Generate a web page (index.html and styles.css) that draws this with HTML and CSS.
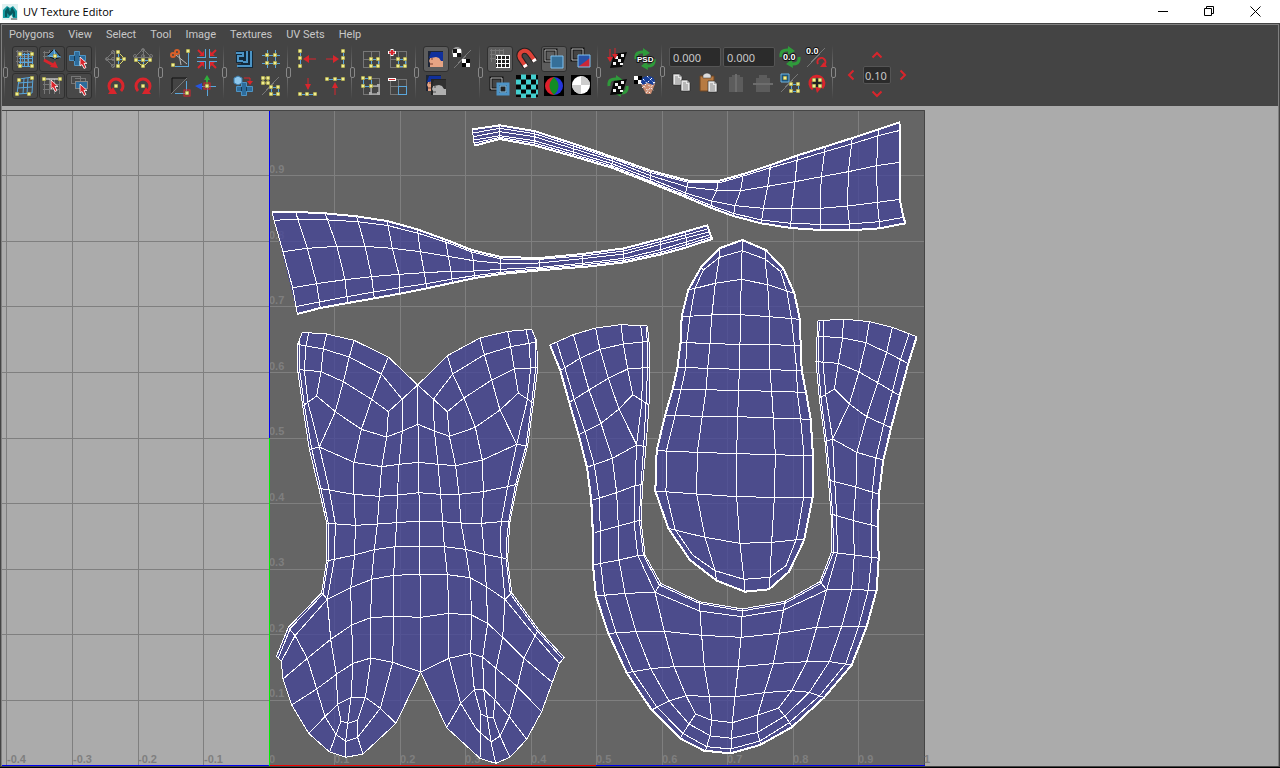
FILE: index.html
```
<!DOCTYPE html>
<html lang="en">

<head>
  <meta charset="UTF-8">
  <meta name="viewport" content="width=device-width, initial-scale=1.0">
  <title>UV Texture Editor</title>
  <link rel="stylesheet" href="styles.css">
</head>

<body>
  <!-- shared icon parts -->
  <svg class="defs" aria-hidden="true">
    <defs>
      <g id="pt"><rect x="-2" y="-2" width="4" height="4" fill="#77742c"/><rect x="-1.5" y="-1.5" width="3" height="3" fill="#f2ee90"/></g>
      <g id="cursor"><path d="M0 0v9l2-1.500 2 4 2-1-2-4h3z" fill="#d9252c" stroke="#fff" stroke-width=".8"/></g>
      <g id="face">
        <rect width="15" height="16" fill="#1d2536"/>
        <path d="M3 5L1 10l1 2v4h13V5z" fill="#e6a484"/>
        <path d="M3 1h12v9h-2l-2-3-3-1-5 1H1z" fill="#10309c"/>
        <path d="M3 8h2M2 13h3" stroke="#7c4030"/>
      </g>
      <g id="sheet">
        <path d="M0 0h6l3 3v8H0z" fill="#e6e6e6" stroke="#222" stroke-width=".6"/>
        <path d="M2 3h3M2 5h5M2 7h5M2 9h5" stroke="#888"/>
        <path d="M6 0v3h3" fill="#aaa"/>
      </g>
      <g id="cycle">
        <path d="M3 12Q2 4 11 5M21 12q1 8-8 7" fill="none" stroke="#2f9a3b" stroke-width="3"/>
        <path d="M10 1l7 5-7 4zM14 14l-6 5 7 4z" fill="#2f9a3b"/>
      </g>
      <g id="plate">
        <path d="M8 7l13-2-5 15L4 21z" fill="#080808"/>
        <path d="M9 9h3v3H9zM15 7h3v3h-3zM12 12h3v3h-3zM7 15h3v3H7zM14 16h3v2h-3z" fill="#f4f4f4"/>
      </g>
    </defs>
  </svg>

  <header class="titlebar">
    <svg class="logo" viewBox="0 0 16 16">
      <rect width="16" height="16" fill="#dff1f1"/>
      <path d="M1 14V6l4-4 3 2 3-2 4 5v7h-4l-2-4-2 4z" fill="#139aa0"/>
      <path d="M3 13V7l3-4 2 5 2-5 3 5v5h-2V9l-3 3-3-3v4z" fill="#07585f"/>
      <path d="M9 15h6" stroke="#444"/>
    </svg>
    <h1>UV Texture Editor</h1>
    <div class="window-buttons">
      <button aria-label="Minimize"><svg viewBox="0 0 11 11"><path d="M0 5.500h10"/></svg></button>
      <button aria-label="Restore"><svg viewBox="0 0 11 11"><path d="M.5 2.500h7v7h-7zM2.500 2.500v-2h7v7h-2"/></svg></button>
      <button aria-label="Close"><svg viewBox="0 0 11 11"><path d="M.5.5l10 10M10.500.5l-10 10"/></svg></button>
    </div>
  </header>

  <main class="frame">
    <nav class="menu">
      <a href="#">Polygons</a>
      <a href="#">View</a>
      <a href="#">Select</a>
      <a href="#">Tool</a>
      <a href="#">Image</a>
      <a href="#">Textures</a>
      <a href="#">UV Sets</a>
      <a href="#">Help</a>
    </nav>

    <div class="toolbar">
      <div class="group">
        <div class="handle"></div>
        <div class="tools three">
          <button class="boxed" aria-label="UV lattice"><svg viewBox="0 0 24 24">
            <path class="gray" d="M3 4h16M3 9h16M3 14h16M4 3v16M9 3v16M14 3v16"/>
            <path class="blue" d="M6 7h14M6 11h14M6 15h14M6 19h14M7 6v14M11 6v14M15 6v14M19 6v14"/>
            <use href="#pt" x="7" y="7"/><use href="#pt" x="19" y="7"/><use href="#pt" x="7" y="19"/><use href="#pt" x="19" y="19"/></svg></button>
          <button class="boxed" aria-label="Move UV shell"><svg viewBox="0 0 24 24">
            <path class="gray" d="M3 5h11M3 9h8M4 4v9M9 3v8"/>
            <path d="M7 9l7-7 7 8-6 2z" fill="#3f83b5" stroke="#111"/><path d="M14 2l1 10M7 9l14 1" stroke="#7cc0ee"/>
            <path d="M4 13l11 6" stroke="#d9252c" stroke-width="3"/><path d="M18 21l-8-1 5-6z" fill="#d9252c"/><use href="#pt" x="15" y="9"/></svg></button>
          <button class="boxed" aria-label="Shortest path"><svg viewBox="0 0 24 24">
            <path d="M2.500 8.500h5v-4h5v4h6v5h-6v5h-5v-5h-5z" fill="#2d6c9c" stroke="#4f94c4"/><path d="M7.500 9v5M12.500 9v5" stroke="#163a55"/>
            <use href="#cursor" x="13" y="10"/></svg></button>
          <button class="boxed" aria-label="UV smudge"><svg viewBox="0 0 24 24">
            <path class="skew" d="M6 5l14-2-1 16-15 1zM11 4l-1 16M15 4l-1 16M5 9l14-1M5 14l14-1"/>
            <use href="#pt" x="6" y="6"/><use href="#pt" x="19" y="4"/><use href="#pt" x="4" y="20"/><use href="#pt" x="16" y="20"/></svg></button>
          <button class="boxed" aria-label="Tweak UV"><svg viewBox="0 0 24 24">
            <path class="gray" d="M3 10h17M3 15h17M4 5v15M9 5v15M14 5v15M19 5v15"/><path d="M4 5h17" stroke="#fff"/>
            <use href="#pt" x="4" y="5"/><use href="#pt" x="20" y="5"/><use href="#cursor" x="11" y="6"/></svg></button>
          <button class="boxed" aria-label="Select shell"><svg viewBox="0 0 24 24">
            <path class="gray" d="M4 2h9v7H4zM8 4h10v6"/><rect x="8.500" y="7.500" width="12" height="7" fill="#2d6c9c" stroke="#111"/><rect x="8.500" y="7.500" width="12" height="7" fill="none" stroke="#fff" stroke-dasharray="1 1"/>
            <use href="#cursor" x="13" y="10"/></svg></button>
        </div>
      </div>

      <div class="group">
        <div class="handle"></div>
        <div class="tools two">
          <button aria-label="Flip U"><svg viewBox="0 0 24 24">
            <path class="gray" d="M10 4l-8 8 8 8M10 4v16M2 12h8"/><path class="blue" d="M14 4v16M14 12h7"/><path class="yellow" d="M14 5l7 7-7 7"/>
            <circle class="gray" cx="3" cy="12" r="1.500"/><circle class="gray" cx="9" cy="12" r="1.500"/><circle class="gray" cx="9" cy="5" r="1.500"/><circle class="gray" cx="9" cy="19" r="1.500"/>
            <use href="#pt" x="14" y="5"/><use href="#pt" x="14" y="12"/><use href="#pt" x="20" y="12"/><use href="#pt" x="14" y="19"/></svg></button>
          <button aria-label="Flip V"><svg viewBox="0 0 24 24">
            <path class="gray" d="M4 10l8-8 8 8zM12 2v8"/><path class="blue" d="M4 13h16M12 13v7"/><path class="yellow" d="M5 13l7 7 7-7"/>
            <circle class="gray" cx="4" cy="9" r="1.500"/><circle class="gray" cx="12" cy="3" r="1.500"/><circle class="gray" cx="20" cy="9" r="1.500"/><circle class="gray" cx="12" cy="9" r="1.500"/>
            <use href="#pt" x="5" y="13"/><use href="#pt" x="12" y="13"/><use href="#pt" x="19" y="13"/><use href="#pt" x="12" y="19"/></svg></button>
          <button aria-label="Rotate counterclockwise"><svg viewBox="0 0 24 24"><path class="turn" d="M7 17a7 7 0 1 1 10 0"/><path d="M4 20l9 0-4-7z" fill="#d9252c"/><use href="#pt" x="12" y="12"/></svg></button>
          <button aria-label="Rotate clockwise"><svg viewBox="0 0 24 24"><path class="turn" d="M7 17a7 7 0 1 1 10 0"/><path d="M20 20l-9 0 4-7z" fill="#d9252c"/><use href="#pt" x="12" y="12"/></svg></button>
        </div>
      </div>

      <div class="group">
        <div class="handle"></div>
        <div class="tools two">
          <button aria-label="Cut UVs"><svg viewBox="0 0 24 24">
            <path class="blue" d="M20 5v14H6"/><path d="M8 8l11 9M11 7l2 11" stroke="#b9b9b9"/>
            <circle cx="5" cy="8" r="2" class="orange"/><circle cx="9" cy="5" r="2" class="orange"/>
            <use href="#pt" x="20" y="4"/><use href="#pt" x="5" y="18"/></svg></button>
          <button aria-label="Sew UVs"><svg viewBox="0 0 24 24">
            <path class="blue" d="M2 10h8V2M14 2v8h8M2 14h8v8M14 22v-8h8"/>
            <path class="red" d="M3 3l5 5M21 3l-5 5M3 21l5-5M21 21l-5-5"/><path d="M9 9H4l5-5zM15 9h5l-5-5zM9 15H4l5 5zM15 15h5l-5 5z" fill="#d9252c"/></svg></button>
          <button aria-label="Split UVs"><svg viewBox="0 0 24 24">
            <path d="M4 19V4h15" stroke="#111" fill="none"/><path class="gray" d="M3 20L19 4"/><path class="blue" d="M18 7v12H7"/><rect x="16" y="16" width="6" height="6" class="red thin"/><use href="#pt" x="19" y="19"/></svg></button>
          <button aria-label="Move and sew"><svg viewBox="0 0 24 24">
            <path class="blue" d="M3 12h18M12 12v10"/><path d="M12 12V5" stroke="#2fae3b" stroke-width="2"/><path d="M9 6l3-5 3 5z" fill="#2fae3b"/><path d="M7 9v7l-7-4z" fill="#2655e0"/>
            <rect x="9" y="9" width="6" height="6" class="red thin"/><use href="#pt" x="12" y="12"/></svg></button>
        </div>
      </div>

      <div class="group">
        <div class="handle"></div>
        <div class="tools two">
          <button aria-label="Layout UVs"><svg viewBox="0 0 24 24"><path d="M4 6h7v4H6v4h5v5M19 4v15H6M15 4v11h-4" fill="none" stroke="#12293b" stroke-width="4"/><path d="M4 6h7v3H6v5h5M19 4v15H5M15 4v11h-4" fill="none" stroke="#4b94c6" stroke-width="2"/></svg></button>
          <button aria-label="Grid UVs"><svg viewBox="0 0 24 24"><path class="blue" d="M3 8h18M3 16h18M8 3v18M16 3v18"/><use href="#pt" x="8" y="8"/><use href="#pt" x="16" y="8"/><use href="#pt" x="8" y="16"/><use href="#pt" x="16" y="16"/></svg></button>
          <button aria-label="Unfold UVs"><svg viewBox="0 0 24 24">
            <path d="M4.500 12.500h5v-4h5v4h6v5h-6v4h-5v-4h-5z" fill="#2d6c9c" stroke="#4f94c4"/><path d="M9.500 13v4M14.500 13v4" stroke="#163a55"/>
            <path d="M2 4l4-2 4 2v5l-4 2-4-2z" fill="#8ec8ee" stroke="#3a7cab"/><path class="red thin" d="M12 4h6v4"/><path d="M15 7h6l-3 4z" fill="#d9252c"/></svg></button>
          <button aria-label="Cycle UVs"><svg viewBox="0 0 24 24">
            <path class="gray" d="M3 21L20 3"/><path class="yellow" d="M4 4h5v5H4z"/><path class="blue" d="M12 13h7v7h-7z"/>
            <use href="#pt" x="4" y="4"/><use href="#pt" x="9" y="4"/><use href="#pt" x="4" y="9"/><use href="#pt" x="9" y="9"/><use href="#pt" x="12" y="13"/><use href="#pt" x="19" y="13"/><use href="#pt" x="12" y="20"/><use href="#pt" x="19" y="20"/></svg></button>
        </div>
      </div>

      <div class="group">
        <div class="handle"></div>
        <div class="tools two">
          <button aria-label="Align minimum U"><svg viewBox="0 0 24 24"><path class="blue" d="M4 4v15"/><use href="#pt" x="4" y="4"/><use href="#pt" x="4" y="11"/><use href="#pt" x="4" y="19"/><path class="red thin" d="M9 12h11"/><path d="M13 8v8l-6-4z" fill="#d9252c"/></svg></button>
          <button aria-label="Align maximum U"><svg viewBox="0 0 24 24"><path class="blue" d="M20 4v15"/><use href="#pt" x="20" y="4"/><use href="#pt" x="20" y="11"/><use href="#pt" x="20" y="19"/><path class="red thin" d="M3 12h11"/><path d="M10 8v8l6-4z" fill="#d9252c"/></svg></button>
          <button aria-label="Align minimum V"><svg viewBox="0 0 24 24"><path class="blue" d="M4 20h16"/><use href="#pt" x="4" y="20"/><use href="#pt" x="11" y="20"/><use href="#pt" x="19" y="20"/><path class="red thin" d="M12 4v11"/><path d="M9 10h6l-3 6z" fill="#d9252c"/></svg></button>
          <button aria-label="Align maximum V"><svg viewBox="0 0 24 24"><path class="blue" d="M4 5h16"/><use href="#pt" x="4" y="5"/><use href="#pt" x="12" y="5"/><use href="#pt" x="20" y="5"/><path class="red thin" d="M12 10v11"/><path d="M9 14h6l-3-6z" fill="#d9252c"/></svg></button>
        </div>
      </div>

      <div class="group">
        <div class="handle"></div>
        <div class="tools two">
          <button aria-label="Isolate select"><svg viewBox="0 0 24 24"><path class="gray" d="M3 4h16v16H3zM11 4v16M3 12h16"/><path class="blue" d="M11 12h7v7h-7z"/><use href="#pt" x="11" y="12"/><use href="#pt" x="18" y="12"/><use href="#pt" x="11" y="19"/><use href="#pt" x="18" y="19"/></svg></button>
          <button aria-label="Add to isolated"><svg viewBox="0 0 24 24"><path class="gray" d="M3 4h16v16H3zM11 4v16M3 12h16"/><path class="blue" d="M11 12h7v7h-7z"/><use href="#pt" x="11" y="12"/><use href="#pt" x="18" y="12"/><use href="#pt" x="11" y="19"/><use href="#pt" x="18" y="19"/><path d="M5 2v7M1 5.500h8" stroke="#fff" stroke-width="3"/><path d="M5 3v5M2 5.500h6" stroke="#d9252c" stroke-width="2"/></svg></button>
          <button aria-label="Remove all"><svg viewBox="0 0 24 24"><path class="gray" d="M3 4h16v16H3zM11 4v16M3 12h16"/><path class="blue" d="M3 4h8v8H3z"/><path d="M11 12h8v8h-8z" stroke="#ccc" fill="none"/><use href="#pt" x="3" y="4"/><use href="#pt" x="10" y="4"/><use href="#pt" x="3" y="12"/><use href="#pt" x="11" y="12"/><path d="M17 10h3v3h-3zM9 18h3v3H9zM17 18h3v3h-3z" fill="#aaa"/></svg></button>
          <button aria-label="Remove selected"><svg viewBox="0 0 24 24"><path class="gray" d="M3 5h16v15H3zM11 5v15M3 12h16"/><path class="blue" d="M11 12h8v8h-8z"/><path d="M1 5.500h8" stroke="#fff" stroke-width="3"/><path d="M2 5.500h6" stroke="#d9252c" stroke-width="1"/></svg></button>
        </div>
      </div>

      <div class="group">
        <div class="handle"></div>
        <div class="tools two">
          <button class="boxed on" aria-label="Display image"><svg viewBox="0 0 24 24"><use href="#face" x="4" y="4"/></svg></button>
          <button aria-label="Filtered image"><svg viewBox="0 0 24 24"><path class="gray" d="M3 21L20 3"/><circle cx="6" cy="5" r="5" fill="#999"/><path d="M2 2h4v4H2zM6 6h4v4H6z" fill="#111"/><path d="M6 2h4v4H6zM2 6h4v4H2zM11 12h4v4h-4zM15 16h4v4h-4z" fill="#fff"/><path d="M15 12h4v4h-4zM11 16h4v4h-4z" fill="#000"/></svg></button>
          <button aria-label="Dim image"><svg viewBox="0 0 24 24"><use href="#face" x="2" y="1"/><g class="dim"><use href="#face" x="7" y="5"/></g></svg></button>
        </div>
      </div>

      <div class="group">
        <div class="handle"></div>
        <div class="tools four">
          <button class="boxed on" aria-label="View grid"><svg viewBox="0 0 24 24"><path class="gray" d="M3 2v13M7 2v13M11 2v13M15 2v13M2 3h14M2 7h14M2 11h14"/><path d="M8 8h13v13H8z" fill="#222"/><path class="white" d="M9 8v13M13 8v13M17 8v13M21 8v13M8 8.500h13M8 12.500h13M8 16.500h13M8 20.500h13"/></svg></button>
          <button aria-label="Pixel snap"><svg viewBox="0 0 24 24"><path d="M11 20L5 11q-2-5 3-7 4-1 7 3l5 7" fill="none" stroke="#222" stroke-width="6"/><path d="M11 20L5 11q-2-5 3-7 4-1 7 3l5 7" fill="none" stroke="#df4238" stroke-width="4"/><path d="M11 20l-1.500-2.300M20 14.500l-1.500-2.300" stroke="#fff" stroke-width="4"/></svg></button>
          <button class="boxed on" aria-label="Shade UVs"><svg viewBox="0 0 24 24"><path d="M3 3h11v11H3z" fill="none" stroke="#111" stroke-width="3"/><path d="M3 3h11v11H3z" fill="none" stroke="#bbb"/><path d="M9 9h12v12H9z" fill="#356f99" stroke="#7fc1f0"/></svg></button>
          <button aria-label="Shell distortion"><svg viewBox="0 0 24 24"><path d="M3 2h11v11H3z" fill="none" stroke="#111" stroke-width="3"/><path d="M3 2h11v11H3z" fill="none" stroke="#bbb"/><path d="M9 8h12v12H9z" fill="#2852a8"/><path d="M9 20L21 11v9z" fill="#cc2737"/><path d="M9 8h12v12H9z" fill="none" stroke="#7fc1f0"/></svg></button>
          <button aria-label="Shell borders"><svg viewBox="0 0 24 24"><path d="M3 4h11v11H3z" fill="none" stroke="#111" stroke-width="3"/><path d="M3 4h11v11H3z" fill="none" stroke="#bbb"/><path d="M10 10h10v10H10z" fill="#222" stroke="#4d94c7" stroke-width="3"/><path d="M12 12h6v6h-6z" stroke="#8ccaf3" fill="none"/></svg></button>
          <button aria-label="Checker map"><svg viewBox="0 0 24 24"><path d="M1 1h22v22H1z" fill="#050505"/><path d="M6 3h10M1 8h5M11 8h5M21 8h2M6 13h5M16 13h5M1 18h5M11 18h5M21 18h2M6 22h5M16 22h5M16 3h5" stroke="#44cfcf" stroke-width="5" stroke-dasharray="5 30"/></svg></button>
          <button aria-label="RGB channels"><svg viewBox="0 0 24 24"><path d="M2 2h20v20H2z" fill="#000"/><path d="M12 3a9 9 0 0 0 0 18z" fill="#df1f2c"/><path d="M12 3a9 9 0 0 1 0 18z" fill="#2535dc"/><path d="M12 3q-9 9 0 18 9-9 0-18z" fill="#138c24"/></svg></button>
          <button aria-label="Alpha channel"><svg viewBox="0 0 24 24"><path d="M2 1h20v20H2z" fill="#000"/><circle cx="12" cy="11" r="9" fill="#fff"/><path d="M12 2a9 9 0 0 1 9 9h-9zM12 20a9 9 0 0 1-9-9h9z" fill="#ccc"/></svg></button>
        </div>
      </div>

      <div class="group">
        <div class="handle"></div>
        <div class="tools two">
          <button aria-label="Bake texture"><svg viewBox="0 0 24 24"><use href="#plate"/><path class="red thin" d="M4 2v10M9 1v8"/><path d="M1 10h6l-3 5zM6 7h6l-3 5z" fill="#d9252c"/></svg></button>
          <button aria-label="Update PSD"><svg viewBox="0 0 24 24"><use href="#cycle"/><text class="psd" x="4" y="15">PSD</text></svg></button>
          <button aria-label="Refresh texture"><svg viewBox="0 0 24 24"><use href="#cycle"/><use href="#plate"/></svg></button>
          <button aria-label="Use image ratio"><svg viewBox="0 0 24 24"><path d="M1 2h8v8H1z" fill="#000"/><path d="M1 2h4v4H1zM5 6h4v4H5z" fill="#fff"/><path d="M8 10q0-7 7-7t7 7l-4 10h-5z" fill="#c98b70"/><path d="M8 9q0-7 7-7t7 7l-2 2-5-2-6 2z" fill="#173f9a"/><path d="M10 5l11 12M8 9l9 10M19 4L9 14M22 8L13 19M14 2l8 8" stroke="#fff" stroke-dasharray="2 2"/></svg></button>
        </div>
      </div>

      <div class="group entry">
        <div class="handle"></div>
        <div class="tools six">
          <input class="wide" type="text" value="0.000" aria-label="U coordinate">
          <input class="wide" type="text" value="0.000" aria-label="V coordinate">
          <button aria-label="Refresh values"><svg viewBox="0 0 24 24"><use href="#cycle"/><text class="num" x="5" y="15">0.0</text></svg></button>
          <button aria-label="Absolute or relative"><svg viewBox="0 0 24 24"><path class="gray" d="M2 22L20 3"/><path d="M13 19a4 4 0 1 1 6 1" fill="none" stroke="#d9252c" stroke-width="2"/><path d="M22 22h-7l4-5z" fill="#d9252c"/><text class="num" x="1" y="9">0.0</text></svg></button>
          <button aria-label="Copy"><svg viewBox="0 0 24 24"><use href="#sheet" x="3" y="3"/><use href="#sheet" x="11" y="9"/></svg></button>
          <button aria-label="Paste"><svg viewBox="0 0 24 24"><path d="M3 5h14v15H3z" fill="#b77b43" stroke="#6d4522"/><path d="M6 7V4q4-4 8 0v3z" fill="#ddd" stroke="#333" stroke-width=".5"/><use href="#sheet" x="11" y="10"/></svg></button>
          <button aria-label="Paste U" disabled><svg viewBox="0 0 24 24"><path d="M5 6h14v15H5zM8 4h8v3H8z" fill="#5c5c5c"/><path d="M12 3v18" stroke="#6d6d6d" stroke-width="2"/></svg></button>
          <button aria-label="Paste V" disabled><svg viewBox="0 0 24 24"><path d="M5 7h14v14H5zM8 4h8v4H8z" fill="#5c5c5c"/><path d="M2 13h20" stroke="#6d6d6d" stroke-width="2"/></svg></button>
          <button aria-label="Copy mode"><svg viewBox="0 0 24 24"><path d="M3 3h8v8H3z" fill="#1f5579" stroke="#6fb3e0"/><path class="gray" d="M3 21L20 3"/><path class="blue" d="M13 13h7v7h-7z"/><use href="#pt" x="7" y="7"/><use href="#pt" x="13" y="13"/><use href="#pt" x="20" y="13"/><use href="#pt" x="13" y="20"/><use href="#pt" x="20" y="20"/></svg></button>
          <button aria-label="Cycle values"><svg viewBox="0 0 24 24"><path class="turn" d="M8 18a7 7 0 1 1 9-1"/><path d="M10 15h8l-6 7z" fill="#d9252c"/><path d="M8 8h8v8H8z" fill="#222"/><use href="#pt" x="9" y="9"/><use href="#pt" x="15" y="9"/><use href="#pt" x="9" y="15"/><use href="#pt" x="15" y="15"/></svg></button>
        </div>
      </div>

      <div class="group">
        <div class="handle"></div>
        <div class="nudge">
          <button class="up" aria-label="Up"><svg viewBox="0 0 12 8"><path d="M1.500 6.500L6 2l4.500 4.500"/></svg></button>
          <button class="left" aria-label="Left"><svg viewBox="0 0 8 12"><path d="M6.500 1.500L2 6l4.500 4.500"/></svg></button>
          <input type="text" value="0.10" aria-label="Step">
          <button class="right" aria-label="Right"><svg viewBox="0 0 8 12"><path d="M1.500 1.500L6 6l-4.500 4.500"/></svg></button>
          <button class="down" aria-label="Down"><svg viewBox="0 0 12 8"><path d="M1.500 1.500L6 6l4.500-4.500"/></svg></button>
        </div>
      </div>
    </div>

    <svg class="canvas" viewBox="2 106 1276 660" preserveAspectRatio="xMinYMin slice">
      <rect x="269" y="110" width="656" height="656" fill="#656565"/>
      <path class="grid" d="M2 175.500h923M2 241.500h923M2 306.500h923M2 372.500h923M2 438.500h923M2 503.500h923M2 569.500h923M2 634.500h923M2 700.500h923M6.500 111v655M72.500 111v655M138.500 111v655M203.500 111v655M334.500 111v655M400.500 111v655M465.500 111v655M531.500 111v655M596.500 111v655M662.500 111v655M727.500 111v655M793.500 111v655M858.500 111v655"/>
      <path class="edge" d="M2 110.500h922.500V765"/>
      <g class="ticks">
        <text x="269" y="173">0.9</text><text x="269" y="239">0.8</text><text x="269" y="304">0.7</text>
        <text x="269" y="370">0.6</text><text x="269" y="435">0.5</text><text x="269" y="501">0.4</text>
        <text x="269" y="566">0.3</text><text x="269" y="632">0.2</text><text x="269" y="697">0.1</text>
        <text x="269" y="763">0</text><text x="334" y="763">0.1</text><text x="400" y="763">0.2</text>
        <text x="465" y="763">0.3</text><text x="531" y="763">0.4</text><text x="596" y="763">0.5</text>
        <text x="662" y="763">0.6</text><text x="727" y="763">0.7</text><text x="793" y="763">0.8</text>
        <text x="858" y="763">0.9</text>
        <text x="7" y="763">-0.4</text><text x="73" y="763">-0.3</text><text x="138" y="763">-0.2</text>
        <text x="204" y="763">-0.1</text><text x="924" y="763">1</text>
      </g>
      <path d="M269.500 111v327M2 765.500h267M596 765.500h329" stroke="#0000f0"/>
      <path d="M269.500 438v328" stroke="#00f000"/>
      <path d="M270 765.500h326" stroke="#f00000"/>

      <!-- straps -->
      <g class="shell" transform="translate(265 105) scale(.33333)">
        <path class="fill rim" d="M22 322L66 320 120 322 180 325 275 334 366 348 457 373 545 405 620 435 708 456 823 459 952 447 1077 430 1185 402 1327 361 1341 402 1265 427 1189 448 1077 472 975 484 823 496 708 507 630 519 560 534 485 550 405 566 328 580 248 594 166 609 97 627"/>
        <path d="M22 322L27 346 54 440 83 548 97 627M1327 360L1341 402"/>
        <path d="M27 346L100 342 190 345 278 350 366 361 460 385 548 413 620 441 708 462 823 463 952 453 1077 438 1187 410 1331 371"/>
        <path d="M54 440L127 430 216 424 300 424 382 430 466 440 550 454 625 467 708 475 823 474 952 461 1077 447 1187 418 1335 380"/>
        <path d="M83 548L155 536 240 524 320 515 402 508 478 503 558 499 627 498 708 493 823 487 952 475 1077 460 1187 434 1336 389"/>
        <path d="M92 605L163 591 246 575 327 561 405 548 485 536 562 522 628 512 708 502 823 491 952 480 1077 466 1189 442 1339 396"/>
        <path d="M92 322L127 430 155 536 166 609M180 324L216 424 240 524 248 594M275 334L300 424 320 515 328 580M366 347L382 430 402 508 405 566M457 372L466 440 478 503 485 550M541 404L550 454 558 499 562 532M618 434L625 467 628 519M708 455V508M823 458V497M952 446V488M1077 430V473M1185 400L1189 449M1262 384L1266 428"/>

        <path class="fill rim" d="M622 73L704 61 808 78 925 116 1043 156 1157 197 1270 227 1360 228 1435 207 1517 180 1598 151 1681 125 1762 99 1840 73 1903 52 1906 80 1904 172 1904 283 1915 335 1921 355 1845 370 1755 376 1665 375 1577 369 1489 355 1405 333 1337 308 1259 275 1155 233 1040 188 925 154 808 121 704 102 628 122"/>
        <path d="M622 73L628 122M1903 52L1906 80 1904 172 1904 283 1915 335 1921 355"/>
        <path d="M624 84L704 70 808 86 925 123 1043 161 1157 203 1270 232 1360 234 1435 213 1517 188 1598 165 1680 140 1760 117 1840 92 1906 76"/>
        <path d="M625 95L705 80 808 95 925 131 1043 168 1157 212 1268 246 1355 256 1427 257 1508 244 1590 230 1669 215 1750 200 1835 182 1904 172"/>
        <path d="M626 105L705 92 808 107 925 141 1041 176 1156 221 1262 264 1340 288 1410 302 1495 310 1580 311 1665 310 1748 303 1837 292 1904 283"/>
        <path d="M628 114L704 97 808 114 925 148 1040 182 1155 228 1259 269 1337 301 1405 325 1489 345 1577 355 1665 358 1755 357 1843 350 1916 337"/>
        <path d="M704 60V102M808 77V121M925 115V154M1043 155L1040 188M1157 197L1155 233M1270 227L1259 275M1360 230L1355 256 1340 288 1337 308M1435 207L1427 257 1410 302 1405 334M1517 180L1508 244 1495 310 1489 356M1598 150L1590 230 1580 310 1577 370M1681 124L1669 215 1665 310 1667 376M1762 98L1750 200 1748 303 1755 377M1840 72L1835 182 1837 292 1845 371"/>
      </g>

      <!-- upper body -->
      <g class="shell" transform="translate(265 320) scale(.33333)">
        <path class="fill" d="M112 37L185 42 267 61 370 111 458 195 547 107 645 54 728 34 800 28 815 63 818 145 805 250 788 378 757 492 735 605 731 660 728 718 740 818 820 928 898 1013 883 1030 862 1087 830 1175 785 1258 735 1312 692 1330 645 1315 545 1223 467 1056 393 1210 294 1302 242 1312 194 1296 131 1240 80 1155 54 1077 49 1024 34 1010 70 922 170 818 185 720 185 610 162 507 133 388 113 258 98 150 98 73z"/>
        <path d="M105 60L104 150 118 255 140 386 168 507 190 610 190 720 174 822 76 925 40 1014M131 38L123 77 118 150 129 248 163 381 193 510 211 612 208 718 187 838 90 947 49 1024"/>
        <path d="M810 55L812 145 800 250 783 378 752 492 731 605 725 660 723 718 736 822 815 930 892 1016M783 30L792 70 797 143 787 240 755 373 728 500 709 605 705 660 709 712 720 838 810 947 883 1030"/>
        <path d="M98 73L175 87 253 111 349 162 412 238M505 238L563 162 658 104 737 80 815 66M458 195L370 275M458 195L547 275M102 149L168 155 235 185 320 238 370 275M547 275L597 234 680 180 748 146 818 143"/>
        <path d="M113 258L155 228 211 275 289 328 365 351 412 333 459 313 508 333 553 349 631 322 705 270 760 219 803 248"/>
        <path d="M133 388L163 381 267 427 350 440 402 433 460 427 519 433 572 437 652 420 755 373 788 378"/>
        <path d="M162 505L267 523 343 529 397 525 462 518 527 523 582 523 655 515 728 500 757 492"/>
        <path d="M187 610L271 616 337 612 395 608 463 603 533 605 588 609 650 610 709 605 735 603"/>
        <path d="M187 722L208 718 269 705 328 689 390 680 464 678 538 680 602 688 658 703 723 716"/>
        <path d="M170 818L187 838 257 803 320 778 386 766 465 763 547 764 615 773 664 800 720 838 740 818"/>
        <path d="M54 1077L127 1015 197 958 260 915 317 893 386 889 466 892 552 880 620 885 668 910 713 952 777 1015 862 1087"/>
        <path d="M80 1155L155 1107 214 1063 264 1030 318 1014 383 1027 467 1056 552 1015 617 1000 653 1012 693 1045 757 1100 830 1175"/>
        <path d="M131 1240L180 1190 218 1153 258 1132 301 1132 346 1165 393 1210M545 1223L587 1150 628 1109 656 1108 690 1140 733 1190 785 1258"/>
        <path d="M163 381L211 275 235 185 253 111 267 61M155 228L168 155 175 87 185 42M370 111L349 162 320 238 289 328 267 427 267 523 271 616 269 705 257 803 260 915 264 1030 258 1132 248 1210 242 1264V1312"/>
        <path d="M370 275L365 351 350 440 343 529 337 612 328 689 320 778 317 893 318 1014 301 1132 278 1201 248 1210 228 1203 218 1153 214 1063 197 958 187 838"/>
        <path d="M412 238L412 333 402 433 397 525 395 608 390 680 386 766 386 889 383 1027 346 1165 278 1252 242 1264 213 1243 180 1190 155 1107 127 1015 90 947 70 922M458 195L459 313 460 427 462 518 464 678 465 763 466 892 467 1056"/>
        <path d="M194 1296L213 1243 228 1203M278 1201V1252L294 1302"/>
        <path d="M505 238L508 333 519 433 527 523 533 605 538 680 547 764 552 880 552 1015 587 1150 635 1228 678 1266 705 1248 733 1190 757 1100 777 1015 810 947 820 928"/>
        <path d="M547 275L553 349 572 437 582 523 588 609 602 688 615 773 620 885 617 1000 628 1109 648 1182 667 1192H685L690 1140 693 1045 713 952 720 838"/>
        <path d="M547 107L563 162 597 234 631 322 652 420 655 515 650 610 658 703 664 800 668 910 653 1012 656 1108 667 1192 678 1266 692 1330M648 1182L645 1315M685 1192L705 1248 735 1312"/>
        <path d="M645 54L658 104 680 180 705 270 755 373M728 34L737 80 748 146 760 219"/>
      </g>

      <!-- heel and sole -->
      <g class="shell" transform="translate(540 320) scale(.33333)">
        <path class="fill" d="M30 75L100 44 167 24 243 14 322 18 327 65 330 140 327 255 318 380 308 495 303 600 315 705 362 790 478 845 607 867 735 844 840 785 875 695 875 660 873 582 865 478 855 365 838 235 828 125 833 3 910 -3 988 5 1057 22 1130 50 1105 130 1078 230 1053 325 1030 420 1015 522 1013 620 1017 715 1011 810 980 920 935 1035 853 1132 755 1222 660 1275 572 1300 492 1292 420 1255 335 1170 260 1058 205 940 167 828 157 735 158 660 152 540 140 442 115 345 87 248 60 152z"/>
        <path class="rim" d="M1130 50L1105 130 1078 230 1053 325 1030 420 1017 522 1014 620 1016 715 1010 810 980 920 935 1035 853 1132 755 1222 660 1275 572 1300 492 1292 420 1255 335 1170 260 1058 205 940 168 828 159 735 160 660 154 540 141 442 116 345 88 248 61 152 30 75"/>
        <path d="M50 66L75 145 103 240 135 335 163 435 178 535 181 632 182 732 193 825 228 937 278 1053 350 1160 428 1240 500 1280 572 1287 660 1263 748 1208 838 1128 917 1032 955 922 985 810 995 710 993 610 997 515 1008 415 1030 318 1055 222 1080 122 1107 42"/>
        <path d="M302 17L308 65 308 142 305 250 290 372 285 498 282 605 293 705 345 817 478 873 605 890 730 870 860 810 892 698 890 587 884 480 878 357 858 230 849 125 852 50 851 2"/>
        <path d="M318 20L322 65 323 140 318 250 311 380 303 495 298 600 310 705 358 795 478 850 607 873 735 850 843 790 881 697 878 582 870 478 860 365 843 235 834 125 838 5"/>
        <path d="M60 152L120 115 180 88 250 72 327 64M87 248L147 210 205 175 263 147 328 142M115 345L183 310 237 267 278 224 327 255M140 442L217 415 290 375 318 380M158 540L230 518 282 498 308 493M165 638L235 618 303 600M157 735L237 720 293 707 315 705M167 828L255 820 345 817 362 790"/>
        <path d="M205 940L288 935 373 934 485 946 603 952 718 940 830 922 905 920 980 920M260 1058L332 1046 402 1040 595 1040 700 1031 800 1025 868 1025 935 1035M335 1170L387 1143 438 1127 508 1129 585 1130 673 1118 755 1112 808 1117 853 1132"/>
        <path d="M100 44L120 115 147 210 183 310 217 415 230 518 235 618 237 720 255 820 288 935 332 1046 387 1143 447 1212 512 1248 575 1255 653 1237 735 1188 808 1117 868 1025 905 920 935 810 943 705 940 600 948 500 950 400 980 290 1013 188 1040 97 1057 22"/>
        <path d="M167 24L180 88 205 175 237 267 290 375M243 14L250 72 263 147 278 224M345 817L373 934 402 1040 438 1127 467 1182 515 1201 577 1208 653 1185 715 1165 755 1112 800 1025 830 922 860 810"/>
        <path d="M478 845L485 946 493 1040 508 1129 515 1201 510 1248 497 1290M607 867L603 952 595 1040 585 1130 577 1208 575 1255 572 1300M735 844L718 940 700 1031 673 1118 653 1185 653 1237 662 1275M467 1182L447 1212 420 1255M715 1165L735 1188 758 1222"/>
        <path d="M833 48L908 54 978 68 1040 97 1100 128M828 125L895 130 957 156 1013 188 1078 226M838 235L883 207 928 252 980 290 1053 323M855 365L878 357 950 397 1030 420M865 480L943 500 1015 522M873 582L942 602 1013 620M875 697L943 705 1017 715M840 785L860 810 935 808 1011 812M910 -2L908 54 895 130 883 207M988 5L978 68 957 156 928 252 878 357"/>

        <path class="fill rim" d="M607 -240L677 -210 730 -155 763 -80 779 -5 785 150 798 217 812 297 819 408 818 532 793 657 787 672 747 755 687 808 615 815 530 782 450 720 385 625 346 513 350 392 375 287 398 208 412 145 422 67 425 -10 445 -90 483 -158 538 -215z"/>
        <path d="M607 -208L675 -183 722 -145 742 -80 754 -5 763 75 770 152 772 216 782 297 792 408 791 532 770 655 738 737 690 772 612 778 525 752 458 705 405 628 378 515 379 394 405 287 423 210 437 145 440 67 449 -5 465 -95 490 -150 538 -188z"/>
        <path d="M538 -215L538 -188 526 -110 515 -10 510 70 503 145 498 210 487 287 472 397 470 522 495 652 525 752 530 782M607 -240L604 -120 601 -16 600 73 598 148 596 210 593 290 590 400 590 530 600 670 612 778 615 815M677 -210L675 -183 683 -108 688 -10 689 75 690 150 695 213 700 293 706 404 703 532 695 667 690 772 687 808"/>
        <path d="M445 -90L526 -110 604 -122 683 -106 763 -80M425 -10L515 -15 601 -16 688 -10 779 -2M422 67L510 71 600 73 782 76M412 142L598 148 785 151M398 208L596 211 798 217M375 287L593 290 812 298M349 392L472 397 590 401 706 404 820 408M345 513L470 522 590 530 703 532 818 532M385 625L495 652 600 670 695 667 793 657M483 -158L490 -150M730 -155L722 -145"/>
      </g>
    </svg>
  </main>
</body>

</html>
```
FILE: styles.css
```
/* Page */
* {
  box-sizing: border-box;
}

body {
  display: flex;
  flex-direction: column;
  min-height: 100vh;
  margin: 0;
  background-color: #000;
  color: #c8c8c8;
  font-family: "Noto Sans", "Open Sans", sans-serif;
  font-size: 12px;
}

button {
  padding: 0;
  border: none;
  background: none;
  color: inherit;
}

svg {
  display: block;
}

.defs {
  position: absolute;
  width: 0;
  height: 0;
}

/* Title bar */
.titlebar {
  display: flex;
  align-items: center;
  height: 23px;
  padding-left: 2px;
  background-color: #fff;
  color: #000;
}

.titlebar h1 {
  flex: 1;
  margin: 0 0 0 5px;
  font-family: "Open Sans", sans-serif;
  font-size: 11px;
  font-weight: normal;
}

.logo {
  width: 16px;
  height: 16px;
}

.window-buttons {
  display: flex;
  padding-right: 2px;
}

.window-buttons button {
  display: grid;
  place-items: center;
  width: 46px;
  height: 20px;
}

.window-buttons svg {
  width: 11px;
  height: 11px;
  fill: none;
  stroke: #000;
}

/* Window frame */
.frame {
  display: flex;
  flex: 1;
  flex-direction: column;
  margin: 1px 1px 2px;
  border: 1px solid #808080;
  border-bottom: none;
  background-color: #444;
  outline: 1px solid #444;
}

.menu {
  display: flex;
  gap: 14px;
  height: 19px;
  padding-left: 7px;
  line-height: 20px;
  font-family: Roboto, sans-serif;
  font-size: 11px;
}

.menu a {
  color: #c8c8c8;
  text-decoration: none;
}

/* Toolbar */
.toolbar {
  display: flex;
  align-items: flex-start;
  height: 62px;
}

.group {
  display: flex;
  padding: 1px 1px 0 0;
}

.group.entry {
  padding: 0;
}

.handle {
  display: flex;
  align-items: center;
  width: 9px;
  height: 54px;
  background: linear-gradient(#444, #777, #444) 2px 0 / 1px 100% no-repeat;
}

.handle::after {
  content: "";
  width: 3px;
  height: 9px;
  margin-left: 1px;
  border: 1px solid #888;
  border-radius: 2px;
  background-color: #444;
}

.tools {
  display: grid;
  grid-auto-rows: 27px;
  place-items: center;
}

.tools.two {
  grid-template-columns: repeat(2, 27px);
}

.tools.three {
  grid-template-columns: repeat(3, 27px);
}

.tools.four {
  grid-template-columns: repeat(4, 27px);
}

.tools.six {
  grid-template-columns: repeat(6, 27px);
  grid-auto-rows: 26px;
}

.tools button {
  display: grid;
  place-items: center;
  width: 26px;
  height: 26px;
}

.tools button svg {
  width: 24px;
  height: 24px;
}

.tools .boxed {
  border: 1px solid #303030;
  border-radius: 3px;
  background-color: #484848;
}

.tools .boxed.on {
  background-color: #5d5d5d;
}

.gray,
.blue,
.skew,
.yellow,
.red,
.orange,
.turn,
.white {
  fill: none;
  stroke: #777;
}

path.gray,
path.blue,
.white {
  shape-rendering: crispEdges;
}

.white {
  stroke: #fff;
}

.blue,
.skew {
  stroke: #5aa7dc;
}

.yellow {
  stroke: #d8d66a;
}

.red {
  stroke: #d9252c;
  stroke-width: 2;
}

.red.thin {
  stroke-width: 1;
}

.orange {
  stroke: #d9602a;
  stroke-width: 2;
}

.turn {
  stroke: #d9252c;
  stroke-width: 3;
}

.dim {
  filter: grayscale(1);
}

.psd,
.num {
  fill: #fff;
  stroke: #111;
  stroke-width: 2px;
  paint-order: stroke;
  font-family: "Liberation Sans", sans-serif;
  font-size: 8px;
  font-weight: bold;
}

.num {
  font-size: 9px;
}

.toolbar input {
  height: 20px;
  padding: 0 3px;
  border: 1px solid #555;
  border-radius: 2px;
  background-color: #2b2b2b;
  color: #c8c8c8;
  font-family: "Noto Sans", sans-serif;
  font-size: 11px;
}

.toolbar .wide {
  grid-column: span 2;
  width: 52px;
}

/* Step control */
.nudge {
  display: grid;
  grid-template-areas:
    ". up ."
    "left step right"
    ". down .";
  grid-template-columns: 24px 28px 24px;
  grid-template-rows: 20px 20px 18px;
  place-items: center;
}

.toolbar .nudge input {
  grid-area: step;
  width: 28px;
  height: 18px;
  padding: 0 1px;
}

.nudge svg {
  width: 12px;
  height: 8px;
  fill: none;
  stroke: #d9252c;
  stroke-width: 2;
}

.nudge .left svg,
.nudge .right svg {
  width: 8px;
  height: 12px;
}

.up {
  grid-area: up;
}

.left {
  grid-area: left;
}

.right {
  grid-area: right;
}

.down {
  grid-area: down;
}

/* UV canvas */
.canvas {
  flex: 1;
  width: 100%;
  min-height: 0;
  background-color: #ababab;
}

.grid {
  stroke: #7f7f7f;
}

.edge {
  fill: none;
  stroke: #454545;
}

.ticks {
  fill: #7f7f7f;
  font-family: "Liberation Sans", sans-serif;
  font-size: 11px;
  font-weight: bold;
}

.shell path {
  fill: none;
  stroke: #fff;
  shape-rendering: crispEdges;
  vector-effect: non-scaling-stroke;
}

.shell .fill {
  fill: rgba(68, 68, 153, 0.75);
}

.shell .rim {
  stroke-width: 2px;
}
```
